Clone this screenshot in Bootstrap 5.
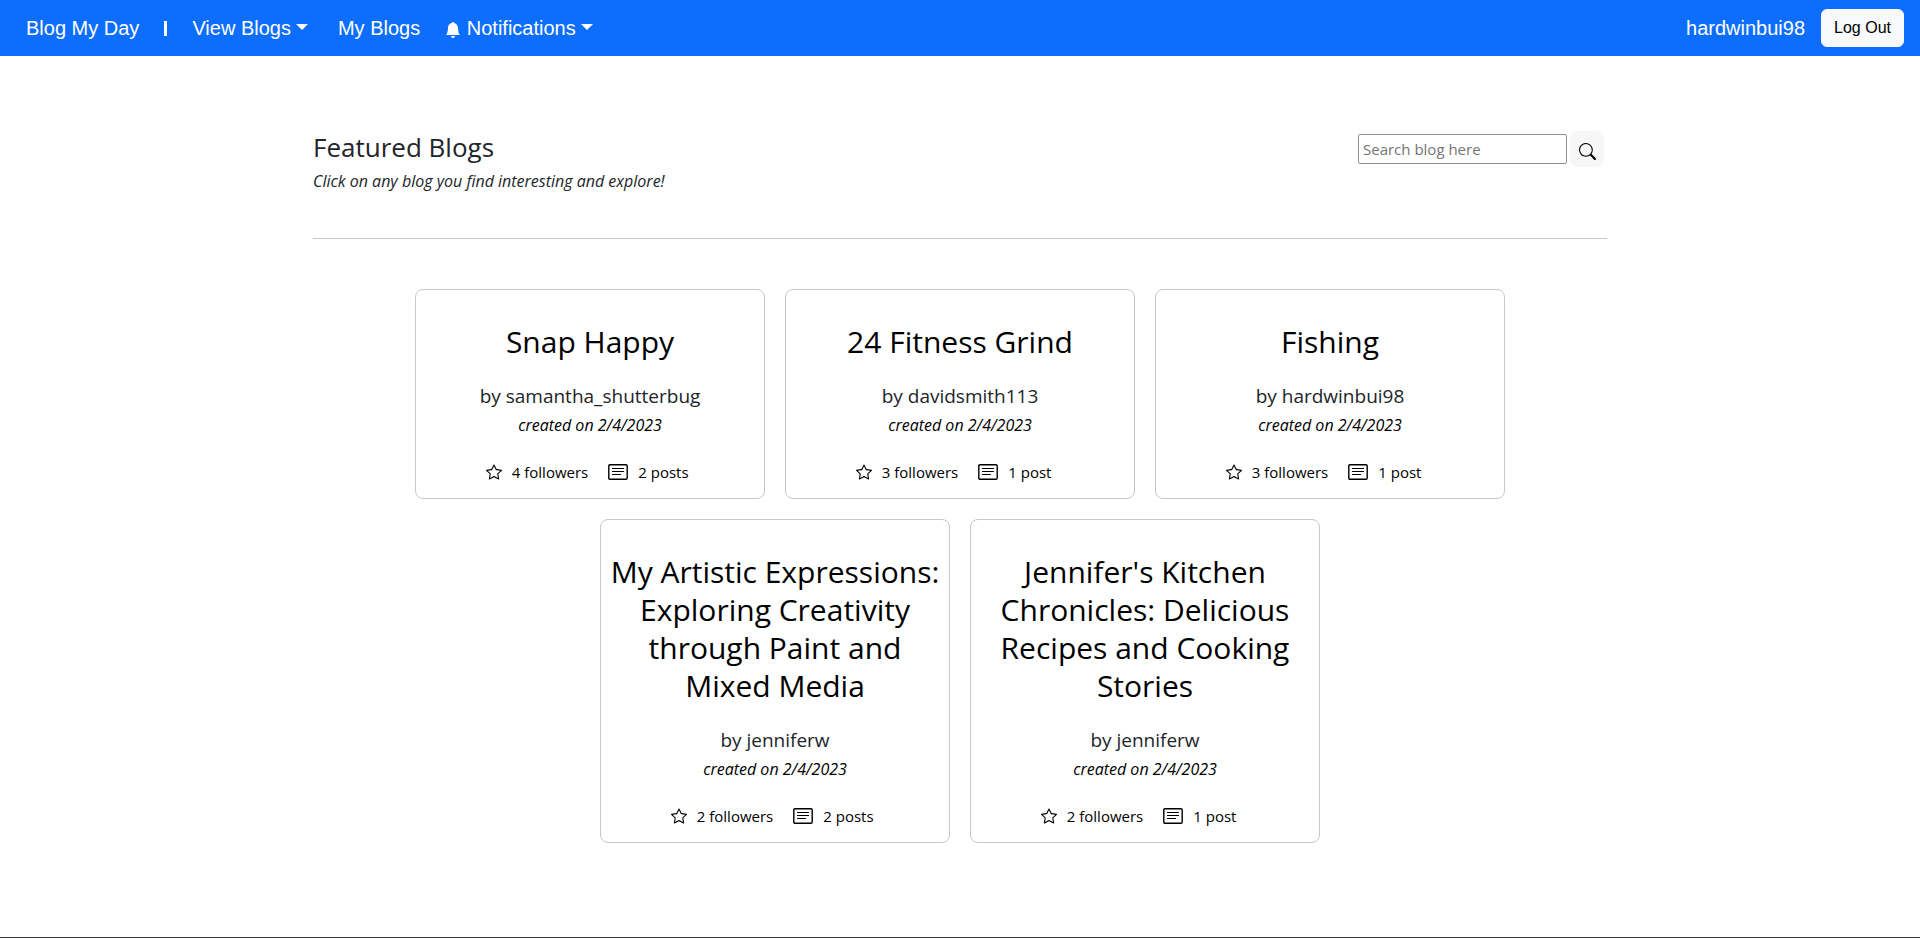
<!DOCTYPE html>
<html lang="en">
<head>
<meta charset="utf-8">
<meta name="viewport" content="width=device-width, initial-scale=1">
<title>Blog My Day</title>
<link href="https://cdn.jsdelivr.net/npm/bootstrap@5.3.0/dist/css/bootstrap.min.css" rel="stylesheet">
<style>
  body { font-family: "Open Sans", sans-serif; }
  .site-nav { min-height: 56px; padding: 8px 16px 8px 26px; font-family: "Liberation Sans", Arial, sans-serif; font-size: 20px; line-height: 30px; }
  .site-nav a { color: #fff; text-decoration: none; }
  .nav-divider { width: 3px; height: 15px; background: #fff; margin: 0 25px; }
  .site-nav .dropdown-toggle::after { margin-left: 5px; vertical-align: 5px; }
  .nav-gap { margin-left: 30px; }
  .nav-gap-sm { margin-left: 25px; }
  .logout-btn { height: 38px; font-size: 16px; line-height: 24px; color: #000; }
  .page-main { padding-left: 13px; padding-right: 13px; }
  .page-top { padding-top: 75px; padding-bottom: 45px; }
  .page-title { font-size: 26px; line-height: 32px; margin-bottom: 6px; font-weight: 400; }
  .page-hint { font-size: 16px; line-height: 24px; }
  .search-form { gap: 3px; padding: 0 3px 0 0; }
  .search-input { width: 209px; height: 30px; padding: 2px 4px; font-size: 15px; border: 1px solid #8f8f9d; border-radius: 2px; }
  .search-input::placeholder { color: #757575; opacity: 1; }
  .search-btn { width: 34px; height: 36px; border: 0; border-radius: 8px; background: #f7f7f7; color: #000; }
  .rule { border-top: 1px solid #c8c8c8; }
  .blog-list { gap: 20px; padding: 50px 0; }
  .blog-card { width: 350px; padding: 33px 8px 14px; border: 1px solid #c8c8c8; border-radius: 8px; color: #000; text-decoration: none; text-align: center; }
  .blog-name { font-size: 30px; line-height: 38px; font-weight: 400; margin-bottom: 20px; }
  .blog-author { font-size: 19px; line-height: 30px; color: #212529; margin-bottom: 2px; }
  .blog-date { font-size: 16px; line-height: 24px; font-style: italic; margin-bottom: 23px; }
  .blog-stats { gap: 20px; font-size: 15px; line-height: 24px; }
  .stat { gap: 10px; }
  .stat-posts { min-width: 56px; text-align: left; }
  .bottom-edge { height: 1px; background: #3b3b3b; }
</style>
</head>
<body class="d-flex flex-column min-vh-100 bg-white">
<svg class="d-none" aria-hidden="true">
  <symbol id="star" viewBox="0 0 16 16"><path d="M2.866 14.85c-.078.444.36.791.746.593l4.39-2.256 4.389 2.256c.386.198.824-.149.746-.592l-.83-4.73 3.522-3.356c.33-.314.16-.888-.282-.95l-4.898-.696L8.465.792a.513.513 0 0 0-.927 0L5.354 5.12l-4.898.696c-.441.062-.612.636-.283.95l3.523 3.356-.83 4.73zm4.905-2.767-3.686 1.894.694-3.957a.565.565 0 0 0-.163-.505L1.71 6.745l4.052-.576a.525.525 0 0 0 .393-.288L8 2.223l1.847 3.658a.525.525 0 0 0 .393.288l4.052.575-2.906 2.77a.565.565 0 0 0-.163.506l.694 3.957-3.686-1.894a.503.503 0 0 0-.461 0z"/></symbol>
  <symbol id="posts" viewBox="0 0 20 16"><path fill="none" stroke="currentColor" stroke-width="1.4" d="M2 .8h16q1.2 0 1.2 1.2v12q0 1.2-1.2 1.2H2Q.8 15.200.8 14V2Q.8.8 2 .8z"/><path fill="none" stroke="currentColor" stroke-width="1.2" stroke-linecap="round" d="M4.500 4.500h11M4.500 7.500h11M4.500 10.500h8"/></symbol>
</svg>

<nav class="site-nav bg-primary d-flex align-items-center">
  <a href="#">Blog My Day</a>
  <span class="nav-divider"></span>
  <a href="#" class="dropdown-toggle" data-bs-toggle="dropdown">View Blogs</a>
  <a href="#" class="nav-gap">My Blogs</a>
  <a href="#" class="dropdown-toggle nav-gap-sm" data-bs-toggle="dropdown"><svg width="16" height="16" viewBox="0 0 16 16" fill="currentColor" aria-hidden="true"><path d="M8 16a2 2 0 0 0 2-2H6a2 2 0 0 0 2 2zm.995-14.901a1 1 0 1 0-1.990 0A5.002 5.002 0 0 0 3 6c0 1.098-.5 6-2 7h14c-1.500-1-2-5.902-2-7 0-2.420-1.720-4.440-4.005-4.901z"/></svg> Notifications</a>
  <a href="#" class="ms-auto me-3">hardwinbui98</a>
  <button type="button" class="btn btn-light logout-btn">Log Out</button>
</nav>

<main class="container page-main">
  <header class="page-top d-flex justify-content-between align-items-start">
    <div>
      <h1 class="page-title">Featured Blogs</h1>
      <p class="page-hint fst-italic mb-0">Click on any blog you find interesting and explore!</p>
    </div>
    <form class="search-form d-flex align-items-center">
      <input type="search" class="search-input" placeholder="Search blog here" aria-label="Search blog here">
      <button type="button" class="search-btn d-flex align-items-center justify-content-center p-0" aria-label="Search"><svg class="mt-1" width="17" height="17" viewBox="0 0 16 16" fill="currentColor"><path d="M11.742 10.344a6.500 6.500 0 1 0-1.397 1.398h-.001c.03.04.062.078.098.115l3.850 3.850a1 1 0 0 0 1.415-1.414l-3.850-3.850a1.007 1.007 0 0 0-.115-.1zM12 6.500a5.500 5.500 0 1 1-11 0 5.500 5.500 0 0 1 11 0z"/></svg></button>
    </form>
  </header>
  <div class="rule"></div>

  <section class="blog-list d-flex flex-wrap justify-content-center px-5">
    <a href="#" class="blog-card">
      <h2 class="blog-name">Snap Happy</h2>
      <p class="blog-author">by samantha_shutterbug</p>
      <p class="blog-date">created on 2/4/2023</p>
      <div class="blog-stats d-flex justify-content-center">
        <span class="stat d-flex align-items-center"><svg width="16" height="16"><use href="#star"/></svg>4 followers</span>
        <span class="stat d-flex align-items-center"><svg width="20" height="16"><use href="#posts"/></svg><span class="stat-posts">2 posts</span></span>
      </div>
    </a>
    <a href="#" class="blog-card">
      <h2 class="blog-name">24 Fitness Grind</h2>
      <p class="blog-author">by davidsmith113</p>
      <p class="blog-date">created on 2/4/2023</p>
      <div class="blog-stats d-flex justify-content-center">
        <span class="stat d-flex align-items-center"><svg width="16" height="16"><use href="#star"/></svg>3 followers</span>
        <span class="stat d-flex align-items-center"><svg width="20" height="16"><use href="#posts"/></svg><span class="stat-posts">1 post</span></span>
      </div>
    </a>
    <a href="#" class="blog-card">
      <h2 class="blog-name">Fishing</h2>
      <p class="blog-author">by hardwinbui98</p>
      <p class="blog-date">created on 2/4/2023</p>
      <div class="blog-stats d-flex justify-content-center">
        <span class="stat d-flex align-items-center"><svg width="16" height="16"><use href="#star"/></svg>3 followers</span>
        <span class="stat d-flex align-items-center"><svg width="20" height="16"><use href="#posts"/></svg><span class="stat-posts">1 post</span></span>
      </div>
    </a>
    <a href="#" class="blog-card">
      <h2 class="blog-name">My Artistic Expressions: Exploring Creativity through Paint and Mixed Media</h2>
      <p class="blog-author">by jenniferw</p>
      <p class="blog-date">created on 2/4/2023</p>
      <div class="blog-stats d-flex justify-content-center">
        <span class="stat d-flex align-items-center"><svg width="16" height="16"><use href="#star"/></svg>2 followers</span>
        <span class="stat d-flex align-items-center"><svg width="20" height="16"><use href="#posts"/></svg><span class="stat-posts">2 posts</span></span>
      </div>
    </a>
    <a href="#" class="blog-card">
      <h2 class="blog-name">Jennifer's Kitchen Chronicles: Delicious Recipes and Cooking Stories</h2>
      <p class="blog-author">by jenniferw</p>
      <p class="blog-date">created on 2/4/2023</p>
      <div class="blog-stats d-flex justify-content-center">
        <span class="stat d-flex align-items-center"><svg width="16" height="16"><use href="#star"/></svg>2 followers</span>
        <span class="stat d-flex align-items-center"><svg width="20" height="16"><use href="#posts"/></svg><span class="stat-posts">1 post</span></span>
      </div>
    </a>
  </section>
</main>
<footer class="bottom-edge mt-auto"></footer>
<script src="https://cdn.jsdelivr.net/npm/bootstrap@5.3.0/dist/js/bootstrap.bundle.min.js"></script>
</body>
</html>
